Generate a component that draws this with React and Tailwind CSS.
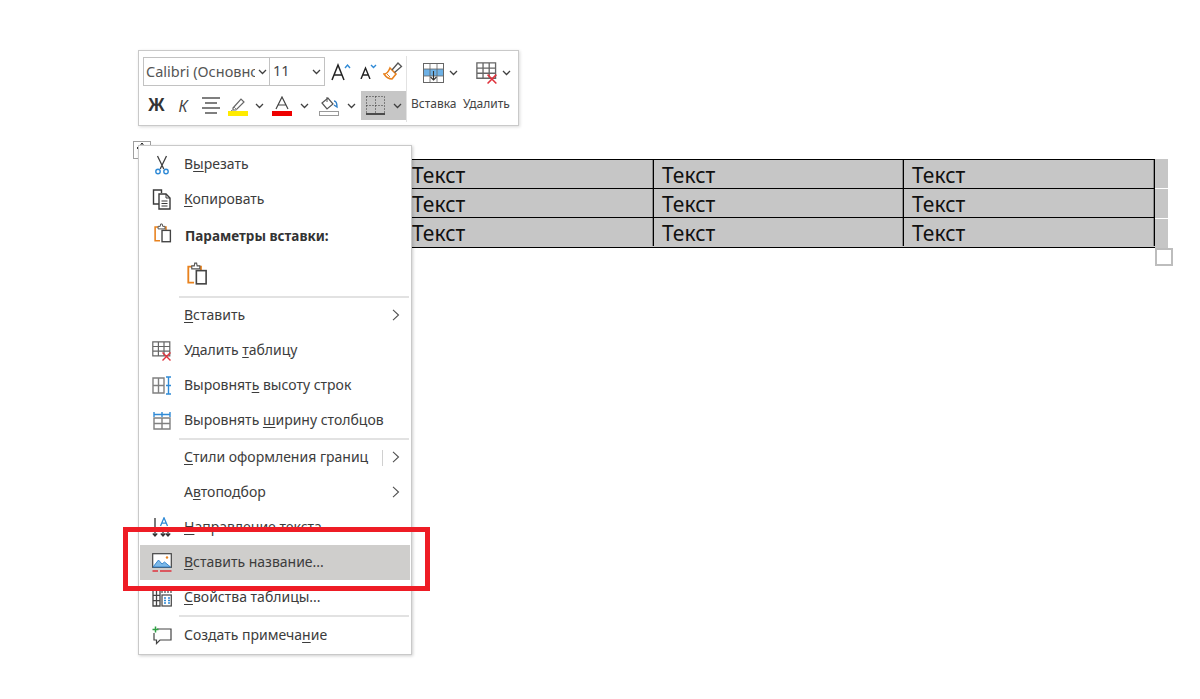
const Chev = ({ className = "" }) => (
  <svg width="9" height="6" viewBox="0 0 9 6" className={className} fill="none" stroke="#404040" strokeWidth="1.3"><path d="M1 1l3.5 3.5L8 1" /></svg>
);
const Right = () => (
  <svg width="8" height="12" viewBox="0 0 8 12" fill="none" stroke="#505050" strokeWidth="1.1"><path d="M1 .8L6.5 6 1 11.2" /></svg>
);
const U = ({ children }) => <span className="underline decoration-1 underline-offset-2">{children}</span>;

const Scissors = () => (
  <svg width="16" height="20" viewBox="0 0 16 20" fill="none">
    <path d="M3.5 1l6.3 13M12.5 1L6.2 14" stroke="#404040" strokeWidth="1.3" />
    <circle cx="4" cy="16.5" r="2.2" stroke="#2f8ad6" strokeWidth="1.4" />
    <circle cx="12" cy="16.5" r="2.2" stroke="#2f8ad6" strokeWidth="1.4" />
  </svg>
);
const Copy = () => (
  <svg width="20" height="21" viewBox="0 0 20 21" fill="none" stroke="#3a3a3a" strokeWidth="1.4">
    <path d="M7 15H1.5V1h8v3" />
    <path d="M7 5h7l4 4v11H7z" fill="#fff" />
    <path d="M14 5v4h4M9.5 12h6M9.5 14.5h6M9.5 17h6" strokeWidth="1" />
  </svg>
);
const Paste = ({ s = 18 }) => (
  <svg width={s} height={s * 1.15} viewBox="0 0 18 21" fill="none">
    <path d="M6 18H1V4h11v3" stroke="#e8821e" strokeWidth="1.6" />
    <path d="M4 6V3.4h2.2L6.6 1h1.6l.5 2.4H11V6z" fill="#fff" stroke="#555" strokeWidth="1" />
    <rect x="8" y="7.5" width="8.5" height="11.5" fill="#fff" stroke="#444" strokeWidth="1.4" />
  </svg>
);
const DelTable = ({ s = 20 }) => (
  <svg width={s} height={s} viewBox="0 0 20 20" fill="none">
    <path d="M.8.8h17v14H.8zM.8 5.5h17M.8 10.2h17M6.4.8v14M12 .8v14" stroke="#666" strokeWidth="1.2" />
    <path d="M10.5 11.5l8 8M18.5 11.5l-8 8" fill="none" stroke="#e0323c" strokeWidth="1.4" />
  </svg>
);
const AlignH = () => (
  <svg width="20" height="19" viewBox="0 0 20 19" fill="none">
    <path d="M1 2h11v15H1zM1 9.5h11M6.5 2v15" stroke="#808080" strokeWidth="1.4" />
    <path d="M14 1h5M14 9.5h5M14 18h5M16.5 1v17" stroke="#2f8ad6" strokeWidth="1.4" />
  </svg>
);
const AlignW = () => (
  <svg width="18" height="19" viewBox="0 0 18 19" fill="none">
    <path d="M1 7h16v11H1zM1 12.5h16M9 7v11" stroke="#808080" strokeWidth="1.4" />
    <path d="M1 1v5M9 1v5M17 1v5M1 3.5h16" stroke="#2f8ad6" strokeWidth="1.4" />
  </svg>
);
const TextDir = () => (
  <svg width="20" height="22" viewBox="0 0 20 22" fill="none">
    <path d="M3 1v18M.8 16.5L3 19l2.2-2.5M11 10v9M8.8 16.5L11 19l2.2-2.5M16 13v6M13.8 16.5L16 19l2.2-2.5" stroke="#333" strokeWidth="1.3" />
    <path d="M8.5 9L12 .8 15.5 9M9.8 6.2h4.4" stroke="#2f8ad6" strokeWidth="1.3" />
  </svg>
);
const Caption = () => (
  <svg width="20" height="20" viewBox="0 0 20 20" fill="none">
    <rect x=".7" y=".7" width="18.6" height="13.6" fill="#fff" stroke="#444" strokeWidth="1.2" />
    <path d="M1 14l5.5-7 3.5 4 2.5-2 6 5z" fill="#7db9e8" stroke="#2f7fc8" strokeWidth=".9" />
    <circle cx="15" cy="4.5" r="1.2" fill="#e8821e" />
    <path d="M.5 18h5.5M8 18h11.5" stroke="#e0323c" strokeWidth="1.3" />
  </svg>
);
const Props = () => (
  <svg width="20" height="18" viewBox="0 0 20 18" fill="none">
    <path d="M1 1h7v16H1zM1 6.3h7M1 11.6h7M4.5 1v16" stroke="#444" strokeWidth="1.3" />
    <path d="M10 1v3M13 1v3M16 1v3M19 1v3" stroke="#444" strokeWidth="1.2" />
    <rect x="10" y="6" width="9.3" height="11" stroke="#444" strokeWidth="1.2" />
    <path d="M12 9h2M16 9h2M12 11.5h2M16 11.5h2M12 14h2M16 14h2" stroke="#2f8ad6" strokeWidth="1.6" />
  </svg>
);
const Comment = () => (
  <svg width="20" height="19" viewBox="0 0 20 19" fill="none">
    <path d="M5 3h14v11H8l-3.5 3.5V14H2V7" stroke="#444" strokeWidth="1.2" />
    <path d="M.5 3.5h6M3.5.5v6" stroke="#2ea043" strokeWidth="1.5" />
  </svg>
);

const Item = ({ icon, children, sub, divider }) => (
  <div className="flex h-[35px] items-center text-[14px] leading-none text-[#3c3c3c]">
    <div className="flex w-[44px] shrink-0 items-center justify-center">{icon}</div>
    <div className="flex-1 whitespace-nowrap pb-px">{children}</div>
    {divider && <div className="mr-[9px] h-[16px] w-px bg-[#d0d0d0]" />}
    {sub && <div className="mr-[10px] flex pb-[2px]"><Right /></div>}
  </div>
);
const Sep = () => <div className="ml-[39px] mr-px h-[2px] bg-[#e2e2e2]" />;

const Cell = ({ w, children, active }) => (
  <div className={`flex h-[29px] items-center justify-center ${active ? "bg-[#c6c6c6]" : ""}`} style={{ width: w }}>{children}</div>
);

const Toolbar = () => (
  <div className="absolute left-[138px] top-[50px] flex h-[76px] w-[381px] border border-[#c9c9c9] bg-white pl-[4px] pt-[6px] text-[#333] shadow-[1px_1px_3px_rgba(0,0,0,0.15)]">
    <div className="flex w-[263px] flex-col gap-[5px]">
      <div className="flex h-[29px] items-center">
        <div className="flex h-[29px] w-[127px] items-center border border-[#c2c2c2] pb-[2px] pl-[2px] text-[14.5px] leading-none text-[#555]">
          <span className="w-[109px] overflow-hidden whitespace-nowrap leading-[18px]">Calibri (Основнс</span>
          <Chev className="ml-[3px] mt-[2px]" />
        </div>
        <div className="flex h-[29px] w-[55px] items-center justify-between border border-l-0 border-[#c2c2c2] pb-[2px] pl-[3px] pr-[3px] text-[14.5px] leading-none text-[#444]">
          <span>11</span><Chev className="mt-[2px]" />
        </div>
        <Cell w={31}>
          <svg width="20" height="18" viewBox="0 0 20 18" fill="none"><path d="M1 17L7 2l6 15M3 12h8" stroke="#222" strokeWidth="1.5" /><path d="M14 5l2.5-3L19 5" stroke="#2f8ad6" strokeWidth="1.4" /></svg>
        </Cell>
        <Cell w={24}>
          <svg width="17" height="15" viewBox="0 0 17 15" fill="none"><path d="M1 15L5.5 4 10 15M2.6 11h6" stroke="#222" strokeWidth="1.4" /><path d="M11 1l2.5 2.5L16 1" stroke="#2f8ad6" strokeWidth="1.4" /></svg>
        </Cell>
        <Cell w={26}>
          <svg width="20" height="19" viewBox="0 0 20 19" fill="none"><path d="M7 6l6 6-4 5c-3 0-6-2-8-5 2 0 4-1 6-6z" fill="#fff" stroke="#e8821e" strokeWidth="1.6" /><path d="M9 8l6-7 3.5 3.5-7 6" stroke="#555" strokeWidth="1.3" /><path d="M4 12l3 3" stroke="#e8821e" /></svg>
        </Cell>
      </div>
      <div className="flex h-[29px] items-center">
        <Cell w={27}><span className="font-['Liberation_Sans',sans-serif] text-[18px] font-bold text-[#333]">Ж</span></Cell>
        <Cell w={26}><span className="text-[16px] italic text-[#444]">К</span></Cell>
        <Cell w={30}>
          <svg width="18" height="17" viewBox="0 0 18 17" stroke="#555" strokeWidth="1.3"><path d="M0 1h18M3 6h12M0 11h18M3 16h12" /></svg>
        </Cell>
        <Cell w={41}>
          <div className="-ml-[2px] flex items-center gap-[7px]">
            <svg width="20" height="20" viewBox="0 0 20 20" fill="none"><path d="M5 12l8-9 3 3-8 8H5z" stroke="#666" strokeWidth="1.2" /><path d="M6 11l3 3" stroke="#888" /><path d="M3 14l2 1-2 1z" fill="#666" /><rect y="15" width="20" height="5" fill="#ffeb00" /></svg>
            <Chev />
          </div>
        </Cell>
        <Cell w={46}>
          <div className="flex items-center gap-[8px]">
            <svg width="20" height="20" viewBox="0 0 20 20" fill="none"><path d="M4 13L10 1l6 12M6 9h8" stroke="#444" strokeWidth="1.2" /><rect y="15" width="20" height="5" fill="#ee0000" /></svg>
            <Chev />
          </div>
        </Cell>
        <Cell w={48}>
          <div className="flex items-center gap-[8px]">
            <svg width="20" height="20" viewBox="0 0 20 20" fill="none"><path d="M3 7l6-5 5 6-6 5z" fill="#fff" stroke="#555" strokeWidth="1.2" /><path d="M8 1v5" stroke="#555" /><path d="M15 5c3 0 3 3 3 6l-3-2" stroke="#2f7fc8" strokeWidth="1.4" /><rect x=".5" y="15.5" width="19" height="4" fill="#fff" stroke="#999" /></svg>
            <Chev />
          </div>
        </Cell>
        <Cell w={45} active>
          <div className="flex items-center gap-[8px]">
            <svg width="19" height="19" viewBox="0 0 19 19" fill="none"><path d="M.5.5h18M.5.5v17M18.5.5v17M.5 9.5h18M9.5.5v17" stroke="#333" strokeDasharray="1 2" /><path d="M0 18h19" stroke="#222" strokeWidth="1.5" /></svg>
            <Chev />
          </div>
        </Cell>
      </div>
    </div>
    <div className="-mt-[1px] mb-[3px] w-px bg-[#e2e2e2]" />
    <div className="flex flex-1 flex-col gap-[5px]">
      <div className="flex h-[29px] items-center pt-[3px]">
        <div className="flex w-[56px] items-center gap-[5px] pl-[16px]">
          <svg width="21" height="20" viewBox="0 0 21 20" fill="none"><rect x=".5" y=".5" width="20" height="19" fill="#fff" stroke="#666" /><rect x="1" y="6" width="19" height="7" fill="#6db1e6" /><path d="M7 1v18M14 1v18M1 6h19M1 13h19" stroke="#666" strokeWidth=".8" /><path d="M10.5 8v9M7.5 14l3 3 3-3" stroke="#333" strokeWidth="1.1" /></svg>
          <Chev />
        </div>
        <div className="flex items-center gap-[4px] pl-[13px]">
          <DelTable s={22} />
          <Chev />
        </div>
      </div>
      <div className="flex h-[29px] items-center pb-[3px] pl-[4px] text-[12px] leading-none text-[#444]">
        <span className="w-[52px] whitespace-nowrap">Вставка</span>
        <span className="whitespace-nowrap">Удалить</span>
      </div>
    </div>
  </div>
);

const Menu = () => (
  <div className="absolute left-[138px] top-[145px] w-[274px] border border-[#c9c9c9] bg-white p-px shadow-[1px_1px_3px_rgba(0,0,0,0.2)]">
    <Item icon={<Scissors />}>В<U>ы</U>резать</Item>
    <Item icon={<Copy />}><U>К</U>опировать</Item>
    <div className="flex h-[39px] items-center text-[13.5px] font-bold leading-none text-[#333]">
      <div className="-mt-[6px] flex w-[45px] justify-center"><Paste /></div>
      <span>Параметры вставки:</span>
    </div>
    <div className="flex h-[40px] items-start pl-[47px] pt-[6px]"><Paste s={21} /></div>
    <Sep />
    <Item sub><U>В</U>ставить</Item>
    <Item icon={<DelTable />}>Удалить <U>т</U>аблицу</Item>
    <Item icon={<AlignH />}>Выровнят<U>ь</U> высоту строк</Item>
    <Item icon={<AlignW />}>Выровнять <U>ш</U>ирину столбцов</Item>
    <Sep />
    <Item sub divider><U>С</U>тили оформления границ</Item>
    <Item sub>А<U>в</U>топодбор</Item>
    <Item icon={<TextDir />}><U>Н</U>аправление текста...</Item>
    <div className="bg-[#cfcecc]"><Item icon={<Caption />}><U>В</U>ставить название...</Item></div>
    <Item icon={<Props />}><U>С</U>войства таблицы...</Item>
    <Sep />
    <div className="mt-px"><Item icon={<Comment />}>Создать примеча<U>н</U>ие</Item></div>
  </div>
);

const rows = [0, 1, 2];
const cols = [250, 250, 250, 251];

const DocTable = () => (
  <div className="ml-[154px] flex pt-[159px]">
    <div className="w-[1001px] border-y border-black bg-[#c6c6c6]">
      {rows.map((r) => (
        <div key={r} className={`flex ${r > 0 ? "h-[29px] border-t border-black" : "h-[28px]"}`}>
          {cols.map((w, i) => (
            <div key={i} className="flex items-center border-r border-black pl-[8px] pt-[2px] text-[21px] leading-none text-[#111] shadow-[inset_-1px_0_0_#8a8a8a]" style={{ width: w }}>
              Текст
            </div>
          ))}
        </div>
      ))}
    </div>
    <div className="flex w-[13px] flex-col gap-px">
      {rows.map((r) => <div key={r} className="h-[29px] bg-[#c6c6c6]" />)}
    </div>
  </div>
);

export default function App() {
  return (
    <div className="relative h-[699px] w-[1200px] overflow-hidden bg-white font-['Noto_Sans',sans-serif]">
      <DocTable />
      <div className="absolute left-[1155px] top-[248px] h-[18px] w-[18px] border-2 border-[#bdbdbd] bg-white" />
      <div className="absolute left-[133px] top-[141px] flex h-[18px] w-[18px] items-start justify-center border border-[#a0a0a0] bg-white">
        <svg width="12" height="12" viewBox="0 0 12 12" fill="none" stroke="#333"><path d="M6 1v10M1 6h10M6 1L4.5 2.5M6 1l1.5 1.5M1 6l1.5-1.5M1 6l1.5 1.5" /></svg>
      </div>
      <Toolbar />
      <Menu />
      <div className="absolute left-[123px] top-[527px] h-[64px] w-[307px] border-[5px] border-[#ee1c25]" />
    </div>
  );
}
